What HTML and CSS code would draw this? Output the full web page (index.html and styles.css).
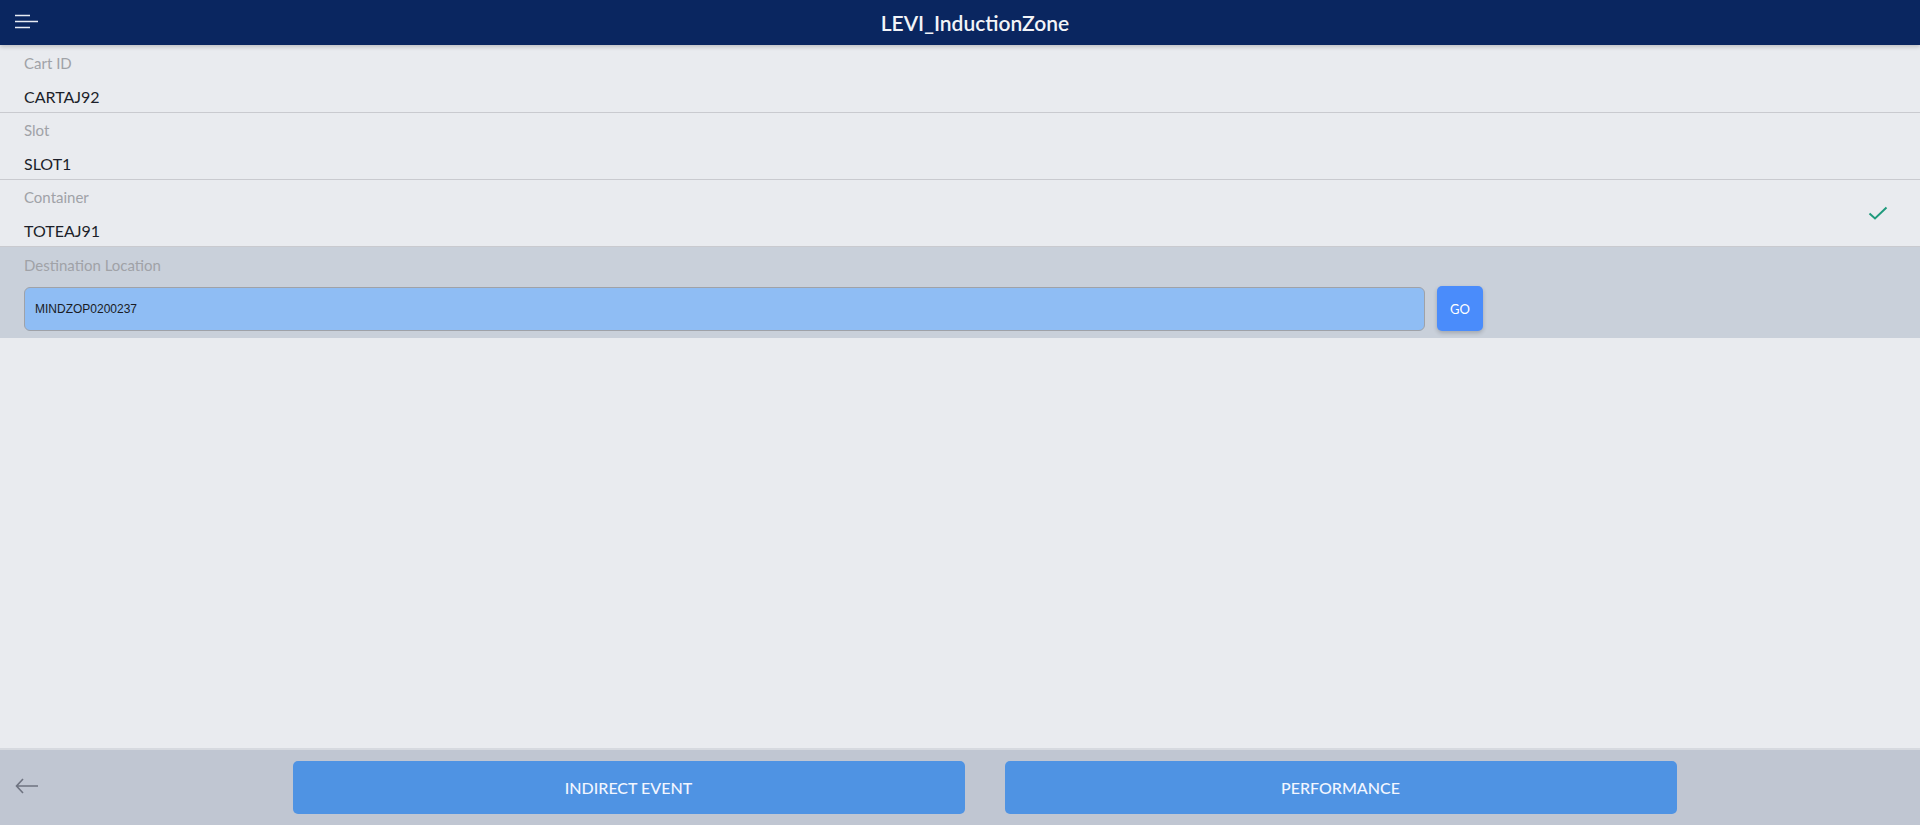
FILE: index.html
```html
<!DOCTYPE html>
<html>
<head>
<meta charset="utf-8">
<link rel="stylesheet" href="styles.css">
</head>
<body>
<div class="app">
  <header class="topbar">
    <button class="menu-btn" aria-label="menu">
      <svg width="24" height="16" viewBox="0 0 24 16"><path d="M0 1.5H15M0 7.5H23M0 13.5H15" stroke="#e8ecf4" stroke-width="1.6" fill="none"/></svg>
    </button>
    <div class="title">LEVI_InductionZone</div>
  </header>
  <main class="content">
    <div class="field first">
      <div class="field-text">
        <div class="label">Cart ID</div>
        <div class="value">CARTAJ92</div>
      </div>
    </div>
    <div class="field">
      <div class="field-text">
        <div class="label">Slot</div>
        <div class="value">SLOT1</div>
      </div>
    </div>
    <div class="field">
      <div class="field-text">
        <div class="label">Container</div>
        <div class="value">TOTEAJ91</div>
      </div>
      <svg class="check" width="20" height="16" viewBox="0 0 20 16"><path d="M1.5 8.5L7 13.5L18.5 2.5" stroke="#1f9a7c" stroke-width="2" fill="none"/></svg>
    </div>
    <div class="field active">
      <div class="label">Destination Location</div>
      <div class="input-row">
        <div class="input">MINDZOP0200237</div>
        <button class="go">GO</button>
      </div>
    </div>
  </main>
  <footer class="footer">
    <button class="back" aria-label="back">
      <svg width="24" height="16" viewBox="0 0 24 16"><path d="M8 1L1.5 8L8 15M1.5 8H23" stroke="#6e7380" stroke-width="1.6" fill="none"/></svg>
    </button>
    <div class="actions">
      <button class="action">INDIRECT EVENT</button>
      <button class="action">PERFORMANCE</button>
    </div>
  </footer>
</div>
</body>
</html>
```
FILE: styles.css
```css
* { box-sizing: border-box; }
html, body { margin: 0; padding: 0; height: 100%; }
body {
  font-family: "Lato", "Noto Sans", sans-serif;
  background: #e9ebef;
}
button { font-family: inherit; border: none; cursor: pointer; }
.app {
  display: flex;
  flex-direction: column;
  height: 100vh;
}
.topbar {
  position: relative;
  height: 45px;
  flex: 0 0 45px;
  background: #0a2660;
  display: flex;
  align-items: center;
  justify-content: center;
  padding-left: 30px;
  box-shadow: 0 2px 4px rgba(0, 0, 0, 0.18);
  z-index: 2;
}
.menu-btn {
  position: absolute;
  left: 15px;
  top: 14px;
  background: transparent;
  padding: 0;
  width: 24px;
  height: 16px;
  display: flex;
}
.title {
  color: #f2f4f8;
  font-size: 21px;
  font-weight: 600;
}
.content {
  flex: 1;
  display: flex;
  flex-direction: column;
}
.field {
  height: 67px;
  padding: 7px 32px 0 24px;
  border-bottom: 1px solid #c9cacf;
  display: flex;
  justify-content: space-between;
  align-items: flex-start;
}
.field.first { height: 68px; padding-top: 8px; }
.label {
  color: #a0a2a7;
  font-size: 15px;
  line-height: 20px;
}
.value {
  color: #1c1f2a;
  font-size: 16px;
  line-height: 20px;
  margin-top: 14px;
}
.check { align-self: center; margin-top: -7px; }
.field.active {
  height: 91px;
  background: #c9d0da;
  border-bottom: none;
  flex-direction: column;
  justify-content: flex-start;
  padding-top: 8px;
}
.input-row {
  display: flex;
  align-items: flex-start;
  gap: 12px;
  margin-top: 11px;
}
.input {
  width: 1401px;
  height: 44px;
  background: #8fbdf4;
  border: 1px solid #9fa2a8;
  border-radius: 6px;
  display: flex;
  align-items: center;
  padding-left: 10px;
  font-family: "Liberation Sans", Arial, sans-serif;
  font-size: 12px;
  color: #1a1c24;
  margin-top: 1px;
}
.go {
  width: 46px;
  height: 45px;
  background: #4a8cfb;
  color: #ffffff;
  border-radius: 5px;
  font-size: 13px;
  box-shadow: 0 2px 4px rgba(0, 0, 0, 0.2);
}
.footer {
  flex: 0 0 77px;
  height: 77px;
  background: #c0c6d2;
  border-top: 2px solid #d6d9df;
  display: flex;
  align-items: flex-start;
}
.back {
  width: 49px;
  height: 100%;
  background: transparent;
  padding: 0 0 0 15px;
  display: flex;
  align-items: center;
  margin-top: -2px;
}
.actions {
  flex: 1;
  display: flex;
  justify-content: center;
  gap: 40px;
  padding-top: 11px;
}
.action {
  width: 672px;
  height: 53px;
  background: #4f93e3;
  color: #f2f6ff;
  border-radius: 5px;
  font-size: 16px;
  font-weight: 500;
}
```
